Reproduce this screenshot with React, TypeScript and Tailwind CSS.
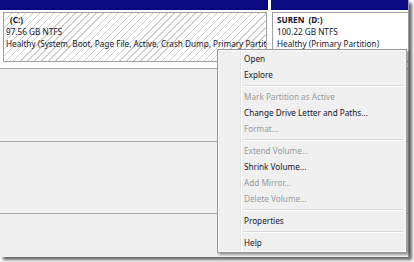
import React from "react";

const font = { fontFamily: '"Noto Sans", "Open Sans", sans-serif' };

type Item = { label: string; disabled?: boolean } | "sep";

const items: Item[] = [
  { label: "Open" },
  { label: "Explore" },
  "sep",
  { label: "Mark Partition as Active", disabled: true },
  { label: "Change Drive Letter and Paths..." },
  { label: "Format...", disabled: true },
  "sep",
  { label: "Extend Volume...", disabled: true },
  { label: "Shrink Volume..." },
  { label: "Add Mirror...", disabled: true },
  { label: "Delete Volume...", disabled: true },
  "sep",
  { label: "Properties" },
  "sep",
  { label: "Help" },
];

export default function App() {
  return (
    <div className="w-[414px] h-[262px] bg-white overflow-hidden text-[8.2px] leading-[12px] text-[#15152a]" style={font}>
      <div className="relative w-[409px] h-[257px] bg-[#f0f0f0] border-r border-[#9c9c9c] shadow-[3px_3px_3px_rgba(0,0,0,0.6)] flex flex-col">
        {/* top volume row */}
        <div className="flex h-[69px] bg-white border-b border-[#a8a8a8] shrink-0">
          <div className="w-[268px] flex flex-col shrink-0">
            <div className="h-[10px] bg-[#0a0a80]" />
            <div className="mt-[2px] ml-[3px] mr-[1px] h-[50px] border border-[#a0a0a0] bg-[repeating-linear-gradient(135deg,#cfcfcf_0px,#cfcfcf_1px,#ffffff_1px,#ffffff_5px)] pl-[2px] pt-[1px] whitespace-nowrap overflow-hidden">
              <div className="font-bold pl-[4px]">(C:)</div>
              <div>97.56 GB NTFS</div>
              <div className="overflow-hidden">Healthy (System, Boot, Page File, Active, Crash Dump, Primary Partition)</div>
            </div>
          </div>
          <div className="ml-[3px] flex-1 flex flex-col">
            <div className="h-[10px] bg-[#0a0a80]" />
            <div className="mt-[2px] ml-[1px] h-[50px] border border-r-0 border-[#a0a0a0] bg-white pl-[4px] pt-[1px] whitespace-nowrap overflow-hidden">
              <div className="font-bold whitespace-pre">SUREN  (D:)</div>
              <div>100.22 GB NTFS</div>
              <div>Healthy (Primary Partition)</div>
            </div>
          </div>
        </div>
        {/* empty rows */}
        <div className="h-[73px] border-b border-[#a8a8a8] shrink-0" />
        <div className="h-[72px] border-b border-[#a8a8a8] shrink-0" />
        <div className="flex-1" />

        {/* context menu */}
        <div className="absolute left-[217px] top-[49px] w-[190px] h-[204px] bg-[#f0f0f0] border border-[#979797] shadow-[2px_2px_2px_rgba(0,0,0,0.35)]">
          <div className="relative h-full border border-[#fafafa]">
            <div className="absolute left-[21px] top-0 bottom-0 w-[1px] bg-[#e2e3e3]" />
            <div className="absolute left-[22px] top-0 bottom-0 w-[1px] bg-white" />
            {items.map((it, i) =>
              it === "sep" ? (
                <div key={i} className="h-[6px] flex flex-col justify-center pl-[24px] pr-[2px]">
                  <div className="h-[1px] bg-[#dadada]" />
                  <div className="h-[1px] bg-white" />
                </div>
              ) : (
                <div
                  key={i}
                  className={`h-[16px] flex items-center pl-[25px] whitespace-nowrap ${it.disabled ? "text-[#9a9a9a]" : "text-[#15152a]"}`}
                >
                  {it.label}
                </div>
              )
            )}
          </div>
        </div>
      </div>
    </div>
  );
}
